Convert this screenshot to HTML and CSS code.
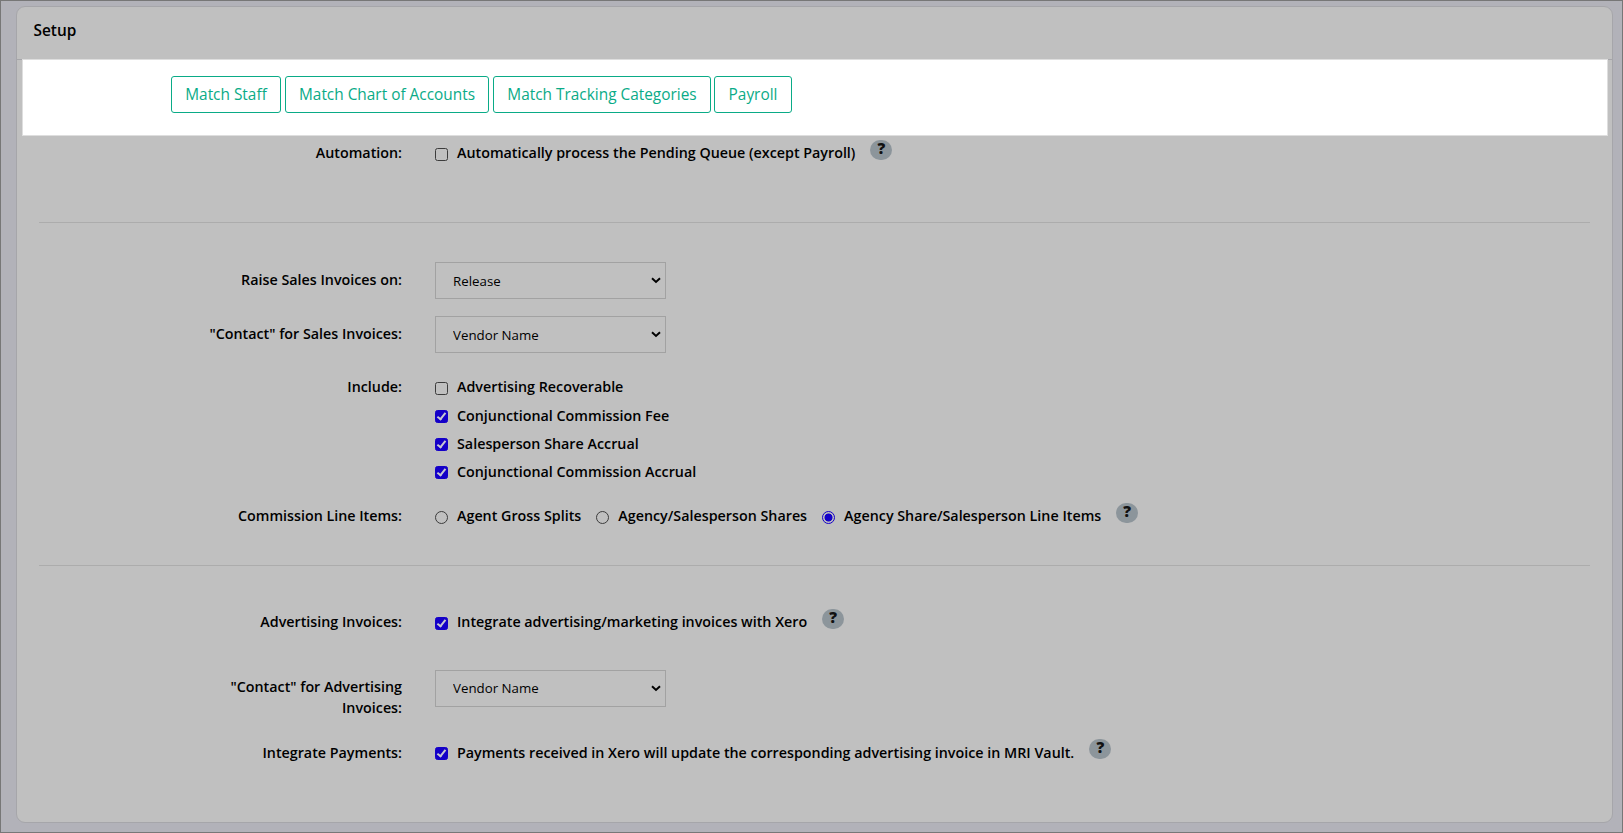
FILE: index.html
```
<!DOCTYPE html>
<html lang="en">
  <head>
    <meta charset="utf-8" />
    <title>Setup</title>
    <link rel="stylesheet" href="styles.css">
  </head>
  <body>
    <div class="page">
      <div class="panel">
        <h3 class="panel-heading">Setup</h3>
        <div class="actions">
          <button class="btn btn-staff">Match Staff</button>
          <button class="btn btn-accounts">Match Chart of Accounts</button>
          <button class="btn btn-tracking">Match Tracking Categories</button>
          <button class="btn btn-payroll">Payroll</button>
        </div>
        <form class="settings">
          <section class="automation">
            <div class="row">
              <div class="name">Automation:</div>
              <div class="field">
                <label><input type="checkbox" />Automatically process the Pending Queue (except Payroll)</label>
                <span class="help">?</span>
              </div>
            </div>
          </section>
          <section class="sales">
            <div class="row row-select">
              <label class="name" for="raise">Raise Sales Invoices on:</label>
              <div class="select">
                <select id="raise"><option>Release</option></select>
                <svg width="10" height="7" viewBox="0 0 10 7"><path d="M1 1.3 5 5l4-3.7" /></svg>
              </div>
            </div>
            <div class="row row-select">
              <label class="name" for="contact">"Contact" for Sales Invoices:</label>
              <div class="select">
                <select id="contact"><option>Vendor Name</option></select>
                <svg width="10" height="7" viewBox="0 0 10 7"><path d="M1 1.3 5 5l4-3.7" /></svg>
              </div>
            </div>
            <div class="row row-include">
              <div class="name">Include:</div>
              <div class="field stack">
                <label class="first"><input type="checkbox" />Advertising Recoverable</label>
                <label><input type="checkbox" checked />Conjunctional Commission Fee</label>
                <label><input type="checkbox" checked />Salesperson Share Accrual</label>
                <label><input type="checkbox" checked />Conjunctional Commission Accrual</label>
              </div>
            </div>
            <div class="row row-commission">
              <div class="name">Commission Line Items:</div>
              <div class="field">
                <label><input type="radio" name="items" />Agent Gross Splits</label>
                <label><input type="radio" name="items" />Agency/Salesperson Shares</label>
                <label><input type="radio" name="items" checked />Agency Share/Salesperson Line Items</label>
                <span class="help">?</span>
              </div>
            </div>
          </section>
          <section class="advertising">
            <div class="row">
              <div class="name">Advertising Invoices:</div>
              <div class="field">
                <label><input type="checkbox" checked />Integrate advertising/marketing invoices with Xero</label>
                <span class="help">?</span>
              </div>
            </div>
            <div class="row row-contact">
              <label class="name" for="adcontact">"Contact" for Advertising Invoices:</label>
              <div class="select">
                <select id="adcontact"><option>Vendor Name</option></select>
                <svg width="10" height="7" viewBox="0 0 10 7"><path d="M1 1.3 5 5l4-3.7" /></svg>
              </div>
            </div>
            <div class="row row-payments">
              <div class="name">Integrate Payments:</div>
              <div class="field">
                <label><input type="checkbox" checked />Payments received in Xero will update the corresponding advertising invoice in MRI Vault.</label>
                <span class="help">?</span>
              </div>
            </div>
          </section>
        </form>
      </div>
    </div>
  </body>
</html>
```
FILE: styles.css
```
* {
  box-sizing: border-box;
}
body {
  margin: 0;
  font-family: "Open Sans", sans-serif;
  font-size: 14.3px;
  line-height: 21px;
  color: #000;
}
.page {
  height: 833px;
  padding: 5px 9px 9px 15px;
  border: 1px solid #777;
  background-color: #b2b2b9;
}
.panel {
  height: 817px;
  border: 1px solid #a6a6aa;
  border-radius: 9px;
  background-color: #c0c0c0;
}
.panel-heading {
  height: 53px;
  margin: 0;
  padding: 13px 16.5px;
  border-bottom: 1px solid #a6a6aa;
  font-size: 15.4px;
  font-weight: 600;
}
/* Highlighted strip of buttons */
.actions {
  display: flex;
  height: 77px;
  margin: -1px 4px 0 5px;
  padding: 16px 148px;
  border: 1px solid #dedede;
  background-color: #fff;
}
.btn {
  height: 37px;
  margin-right: 4px;
  padding: 0 0 1px;
  border: 1px solid #0aab87;
  border-radius: 3px;
  background-color: #fff;
  color: #0aab87;
  font: 15.4px "Open Sans", sans-serif;
}
.btn-staff {
  width: 110px;
}
.btn-accounts {
  width: 204px;
}
.btn-tracking {
  width: 218px;
  margin-right: 3px;
}
.btn-payroll {
  width: 78px;
}
.settings {
  padding: 0 22px;
}
.automation {
  height: 87px;
  padding-top: 6px;
  border-bottom: 1px solid #acacac;
}
.sales {
  height: 343px;
  padding-top: 39px;
  border-bottom: 1px solid #acacac;
}
.advertising {
  padding-top: 45px;
}
.row {
  display: flex;
}
.name {
  width: 200px;
  margin: 0 33px 0 163px;
  font-weight: 600;
  text-align: right;
}
.row-select {
  height: 54px;
}
.row-select .name {
  padding-top: 7px;
}
.row-include {
  margin-top: 6px;
}
.row-commission {
  margin-top: 23px;
}
.row-contact {
  margin-top: 38px;
}
.row-contact .name {
  padding-top: 6px;
}
.row-payments {
  margin-top: 24px;
}
.field {
  display: flex;
  height: 21px;
}
.field label {
  display: flex;
  margin-right: 15px;
  font-weight: 600;
  white-space: nowrap;
}
.stack {
  flex-direction: column;
  gap: 7px;
  height: 106px;
}
.stack .first {
  margin-bottom: 1px;
}
.select {
  position: relative;
  width: 231px;
  height: 37px;
}
select {
  width: 100%;
  height: 100%;
  padding: 0 17px;
  border: 1px solid #a2a2a2;
  border-radius: 0;
  appearance: none;
  background-color: transparent;
  color: #000;
  font: 13.3px "Open Sans", sans-serif;
}
.row-contact select {
  padding-bottom: 2px;
}
/* Arrow lies over the select */
.select svg {
  position: absolute;
  top: 15px;
  right: 5px;
  fill: none;
  stroke: #000;
  stroke-width: 2;
}
input {
  position: relative;
  width: 13px;
  height: 13px;
  margin: 6px 9px 0 0;
  border: 1px solid #3c3c3c;
  border-radius: 2.5px;
  appearance: none;
}
.stack input:checked,
.row-payments input {
  margin-top: 5px;
}
input[type="checkbox"]:checked {
  border-color: #1400c8;
  background-color: #1400c8;
}
input[type="checkbox"]:checked::after {
  content: "";
  box-sizing: border-box;
  position: absolute;
  top: 0;
  left: 3px;
  width: 5px;
  height: 9px;
  border: solid #c8c8d0;
  border-width: 0 2px 2px 0;
  transform: rotate(38deg);
}
input[type="radio"] {
  border-radius: 50%;
}
input[type="radio"]:checked {
  border-color: #1400c8;
  background: radial-gradient(circle, #1400c8 3.6px, transparent 4.4px);
}
.help {
  width: 22px;
  height: 20px;
  margin-top: -2px;
  border-radius: 10px;
  background-color: #8c959b;
  color: #111;
  font-size: 15.4px;
  font-weight: 800;
  line-height: 17px;
  text-align: center;
}
.row-payments .help {
  margin-top: -3px;
}
```
